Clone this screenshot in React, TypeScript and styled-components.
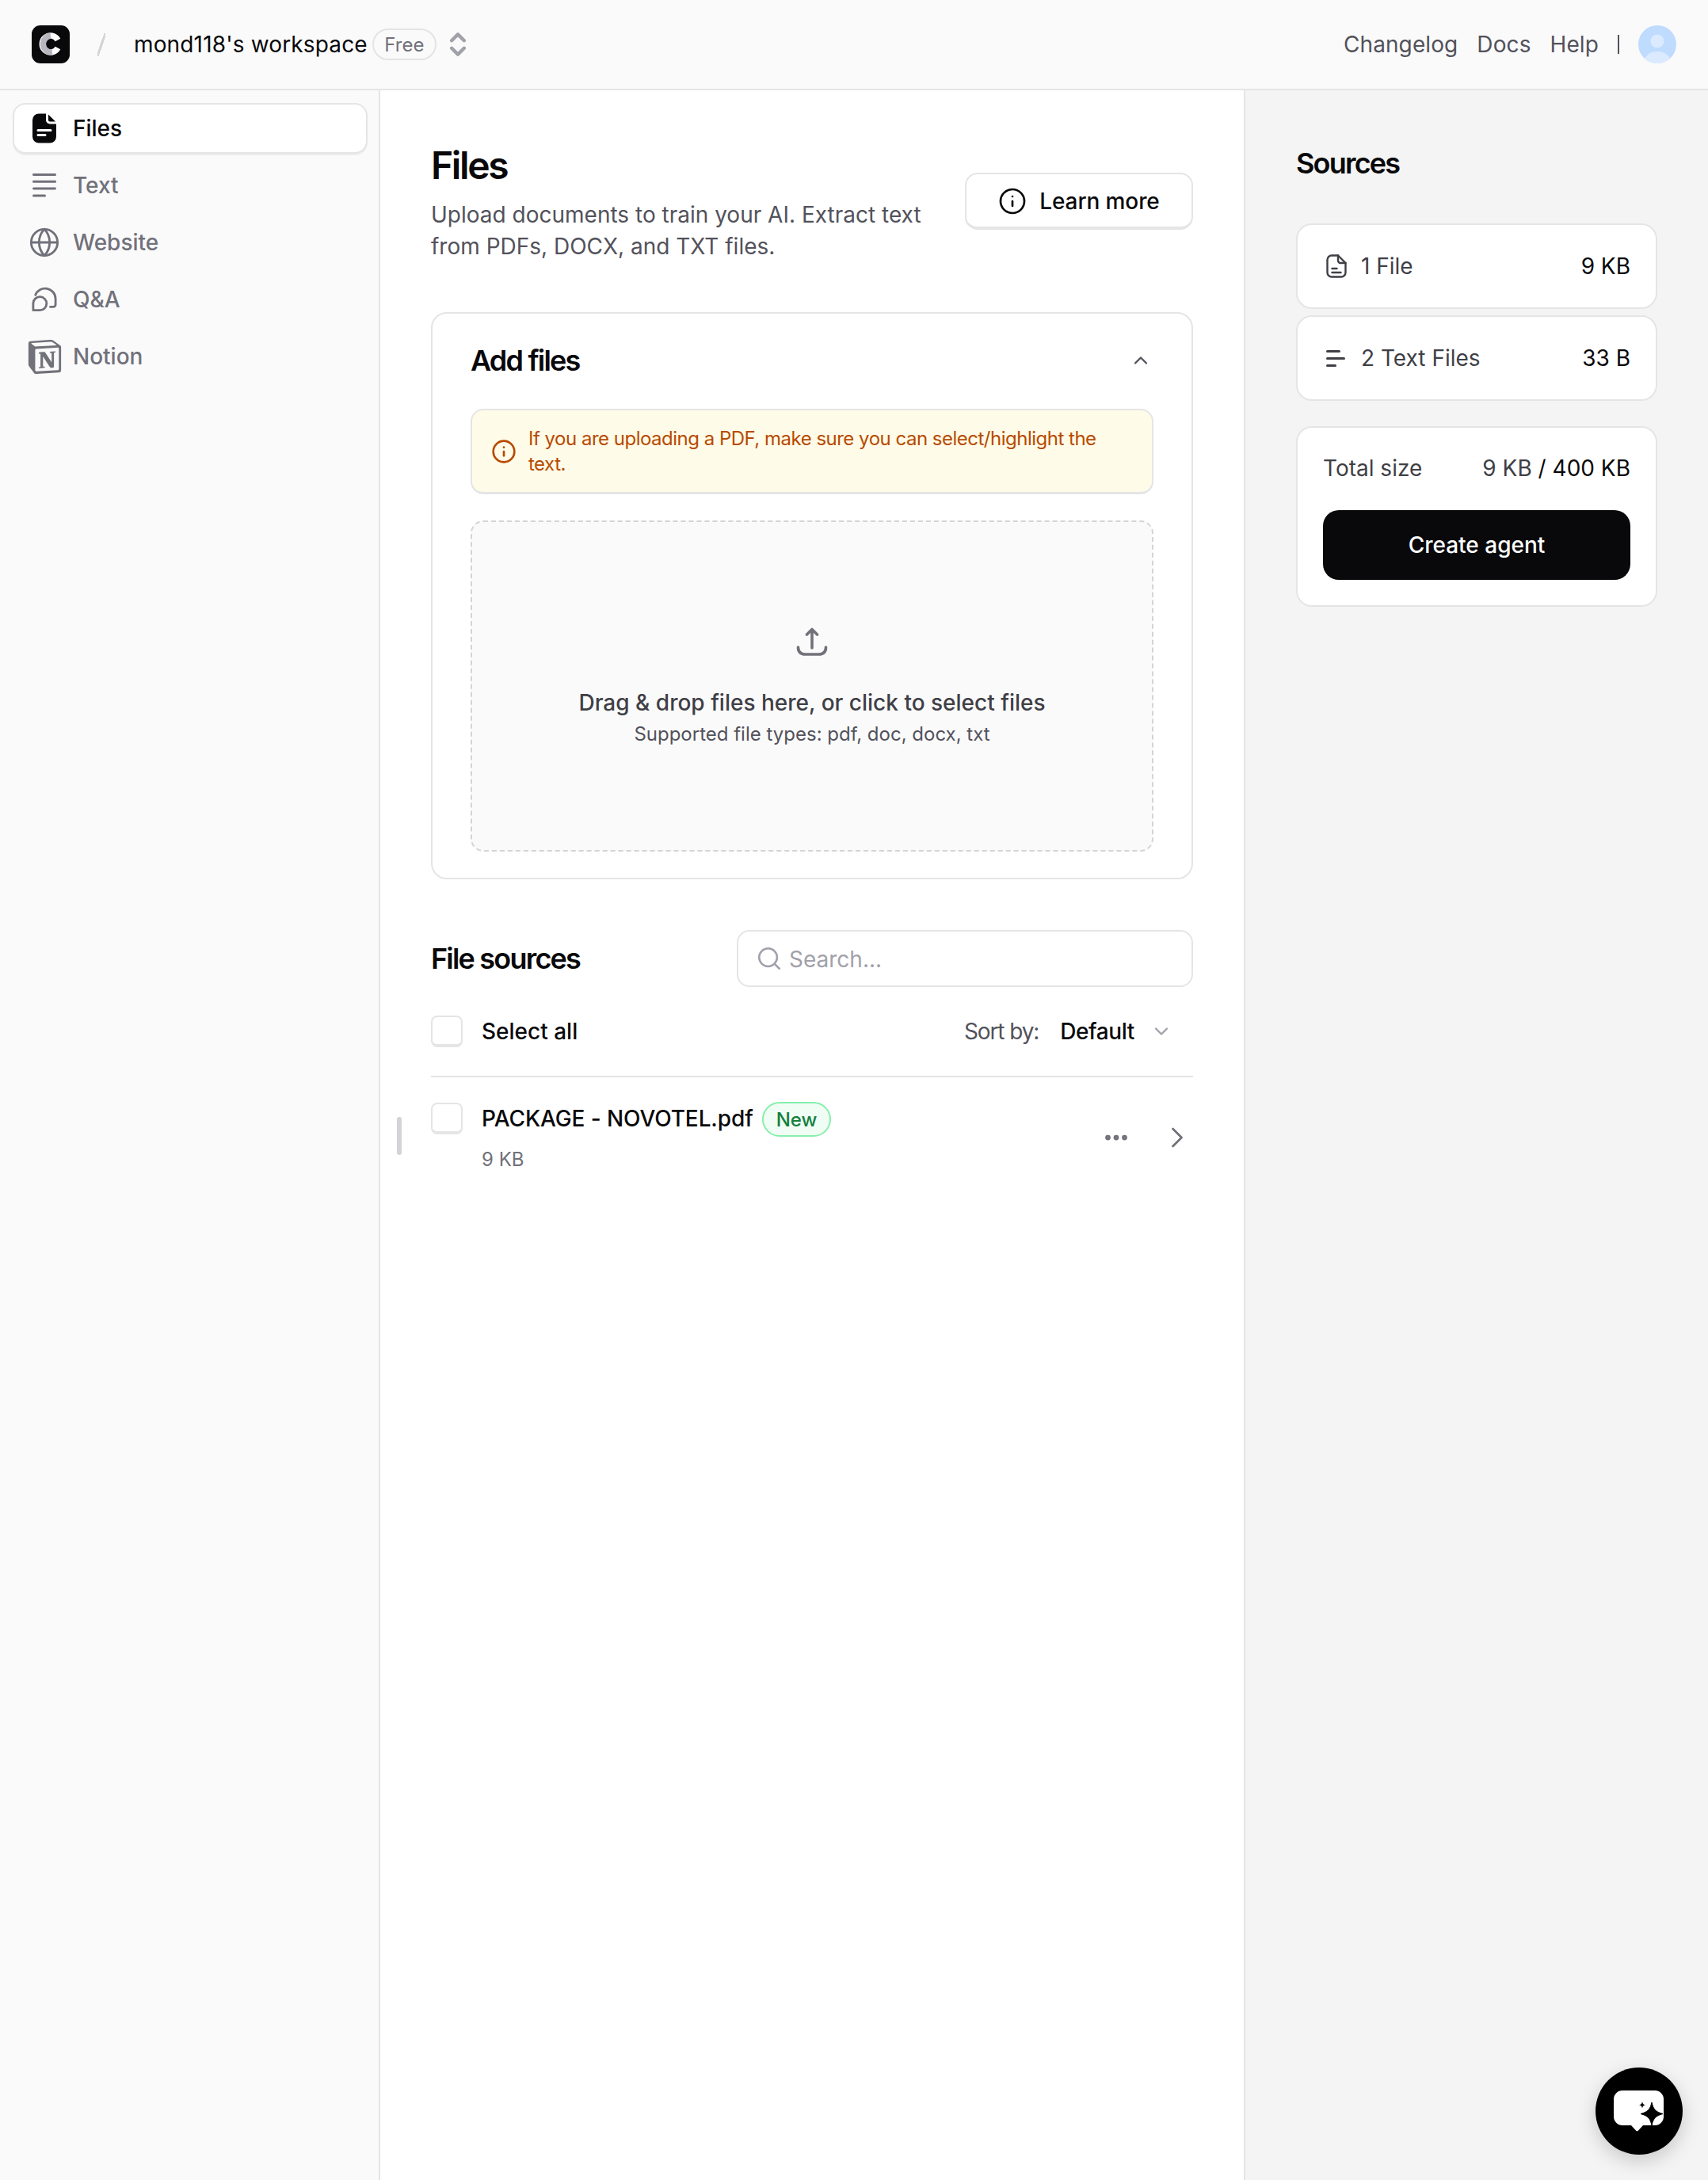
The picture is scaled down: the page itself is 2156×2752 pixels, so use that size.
import React from "react";
import styled, { createGlobalStyle } from "styled-components";
import { Globe, Info, ChevronUp, ChevronDown, ChevronRight, ChevronsUpDown, Search, Ellipsis } from "lucide-react";
import { SiNotion } from "react-icons/si";

const Global = createGlobalStyle`
  * { box-sizing: border-box; }
  html, body { margin: 0; padding: 0; background: #fff; }
  body { font-family: Inter, "Liberation Sans", sans-serif; color: #09090b; }
`;

const Page = styled.div`
  width: 2156px;
  height: 2752px;
  display: flex;
  flex-direction: column;
  overflow: hidden;
`;
const Header = styled.header`
  height: 114px;
  flex: none;
  display: flex;
  align-items: center;
  justify-content: space-between;
  padding: 0 40px;
  background: #fafafa;
  border-bottom: 2px solid #e5e5e5;
`;
const HeaderLeft = styled.div`
  display: flex;
  align-items: center;
`;
const Slash = styled.span`
  width: 10px;
  height: 29px;
  margin: 0 36px 0 35px;
  background: linear-gradient(to bottom right, transparent 42%, #d4d4d8 42%, #d4d4d8 58%, transparent 58%);
`;
const Workspace = styled.span`
  font-size: 28px;
  font-weight: 400;
  letter-spacing: 0.15px;
  color: #09090b;
`;
const PlanBadge = styled.span`
  margin-left: 6px;
  height: 40px;
  padding: 0 13.5px;
  display: inline-flex;
  align-items: center;
  border: 2px solid #e4e4e7;
  border-radius: 20px;
  font-size: 24px;
  color: #71717a;
`;
const UpDown = styled.span`
  margin-left: 8px;
  display: inline-flex;
  color: #a1a1aa;
`;
const HeaderRight = styled.nav`
  display: flex;
  align-items: center;
  gap: 24px;
`;
const TopLink = styled.a`
  font-size: 28px;
  letter-spacing: 0.1px;
  color: #52525b;
`;
const Pipe = styled.span`
  width: 2px;
  height: 24px;
  background: #52525b;
`;
const Avatar = styled.svg`
  width: 48px;
  height: 48px;
  display: block;
`;

const Body = styled.div`
  flex: 1;
  display: flex;
  min-height: 0;
`;
const Sidebar = styled.aside`
  width: 480px;
  flex: none;
  background: #fafafa;
  border-right: 2px solid #e5e5e5;
  padding: 16px 16px;
  display: flex;
  flex-direction: column;
  gap: 8px;
`;
const NavItem = styled.div<{ $active?: boolean }>`
  height: 64px;
  width: 448px;
  display: flex;
  align-items: center;
  gap: 20px;
  padding: 0 22px;
  border-radius: 16px;
  font-size: 28px;
  font-weight: 500;
  color: ${(p) => (p.$active ? "#09090b" : "#71717a")};
  background: ${(p) => (p.$active ? "#fff" : "transparent")};
  border: 2px solid ${(p) => (p.$active ? "#e5e5e5" : "transparent")};
  box-shadow: ${(p) => (p.$active ? "0 2px 0 #ececec" : "none")};
`;
const NavIcon = styled.span`
  width: 32px;
  height: 40px;
  display: flex;
  align-items: center;
  justify-content: center;
  flex: none;
`;

const Main = styled.main`
  width: 1091px;
  flex: none;
  padding: 67px 65px 0 64px;
  background: #fff;
`;
const TitleRow = styled.div`
  display: flex;
  align-items: flex-end;
  justify-content: space-between;
`;
const PageTitle = styled.h1`
  margin: 0 0 14px;
  font-size: 48px;
  line-height: 56px;
  font-weight: 600;
  letter-spacing: -0.05em;
  color: #09090b;
`;
const Lead = styled.p`
  margin: 0;
  width: 640px;
  font-size: 28px;
  line-height: 40px;
  color: #52525b;
`;
const LearnButton = styled.button`
  flex: none;
  width: 288px;
  height: 72px;
  margin-bottom: 41px;
  padding: 2px 0 0;
  display: flex;
  align-items: center;
  justify-content: center;
  gap: 16px;
  background: #fff;
  border: 2px solid #e5e5e5;
  border-bottom-width: 4px;
  border-radius: 16px;
  font: 500 28px Inter, sans-serif;
  letter-spacing: -0.1px;
  color: #09090b;
`;
const AddCard = styled.section`
  margin-top: 63px;
  border: 2px solid #e5e5e5;
  border-radius: 20px;
  padding: 35px 48px 32px;
  height: 716px;
`;
const CardHead = styled.div`
  display: flex;
  align-items: center;
  justify-content: space-between;
  height: 48px;
  color: #52525b;
  padding-right: 2px;
`;
const SectionTitle = styled.h2`
  margin: 0;
  font-size: 36px;
  line-height: 48px;
  font-weight: 600;
  letter-spacing: -0.05em;
  color: #09090b;
`;
const Alert = styled.div`
  margin-top: 37px;
  height: 108px;
  display: flex;
  align-items: center;
  gap: 15px;
  padding: 0 40px 0 24px;
  background: #fefbe8;
  border: 2px solid #e5e5e5;
  border-bottom-width: 3px;
  border-radius: 16px;
  color: #b84a00;
  font-size: 24px;
  line-height: 32px;
  font-weight: 400;
  letter-spacing: -0.5px;
`;
const Drop = styled.div`
  margin-top: 33px;
  height: 418px;
  background: #fafafa;
  border: 2px dashed #d4d4d8;
  border-radius: 16px;
  display: flex;
  flex-direction: column;
  align-items: center;
  justify-content: center;
  padding-top: 2px;
`;
const DropIcon = styled.svg`
  width: 48px;
  height: 48px;
  color: #71717a;
  margin-bottom: 32px;
`;
const DropTitle = styled.div`
  font-size: 28px;
  line-height: 40px;
  font-weight: 500;
  color: #3f3f46;
`;
const DropSub = styled.div`
  font-size: 24px;
  line-height: 40px;
  color: #52525b;
`;
const SourcesHead = styled.div`
  margin-top: 64px;
  display: flex;
  align-items: center;
  justify-content: space-between;
`;
const SearchBox = styled.div`
  width: 576px;
  height: 72px;
  border: 2px solid #e5e5e5;
  border-radius: 16px;
  display: flex;
  align-items: center;
  gap: 8px;
  padding: 0 22px;
  color: #a1a1aa;
  font-size: 28px;
`;
const Placeholder = styled.span`
  padding-top: 2px;
`;
const SelectRow = styled.div`
  margin-top: 36px;
  height: 78px;
  display: flex;
  align-items: flex-start;
  justify-content: space-between;
  border-bottom: 2px solid #e5e5e5;
`;
const CheckLabel = styled.label`
  display: flex;
  align-items: center;
  gap: 24px;
  font-size: 28px;
  font-weight: 500;
  color: #09090b;
`;
const Check = styled.span`
  width: 40px;
  height: 40px;
  display: block;
  flex: none;
  background: #fff;
  border: 2px solid #e5e5e5;
  border-bottom-width: 4px;
  border-radius: 8px;
`;
const Sort = styled.div`
  display: flex;
  align-items: center;
  height: 40px;
  font-size: 28px;
  padding-right: 26px;
`;
const SortLabel = styled.span`
  color: #52525b;
  letter-spacing: -1.1px;
  margin-right: 27px;
`;
const SortValue = styled.span`
  font-weight: 500;
  letter-spacing: -0.4px;
  color: #09090b;
  margin-right: 20px;
`;
const FileRow = styled.div`
  position: relative;
  margin-top: 32px;
  display: flex;
  align-items: flex-start;
  gap: 24px;
`;
const Handle = styled.span`
  position: absolute;
  left: -43px;
  top: 18px;
  width: 6px;
  height: 48px;
  border-radius: 3px;
  background: #d4d4d8;
`;
const FileInfo = styled.div`
  flex: 1;
  display: flex;
  flex-direction: column;
`;
const NameLine = styled.div`
  display: flex;
  align-items: center;
  gap: 11px;
  height: 40px;
`;
const FileName = styled.span`
  font-size: 28px;
  font-weight: 500;
  letter-spacing: -0.1px;
  color: #09090b;
`;
const NewBadge = styled.span`
  height: 44px;
  padding: 0 16px;
  display: inline-flex;
  align-items: center;
  background: #f0fdf4;
  border: 2px solid #86efac;
  border-radius: 22px;
  color: #15803d;
  font-size: 24px;
  font-weight: 500;
  margin-top: 2px;
`;
const FileSize = styled.div`
  margin-top: 18px;
  font-size: 24px;
  line-height: 28px;
  color: #71717a;
`;
const RowActions = styled.div`
  display: flex;
  align-items: center;
  gap: 37px;
  margin: 22px -2px 0 0;
  color: #71717a;
`;

const Panel = styled.aside`
  flex: 1;
  background: #f4f4f4;
  border-left: 2px solid #e5e5e5;
  padding: 64px 64px 0 64px;
  margin-left: -1px;
`;
const PanelTitle = styled.h2`
  margin: 0 0 48px;
  height: 56px;
  font-size: 36px;
  line-height: 56px;
  font-weight: 600;
  letter-spacing: -0.05em;
  color: #09090b;
`;
const PanelList = styled.div`
  display: flex;
  flex-direction: column;
  gap: 8px;
`;
const PanelCard = styled.div`
  height: 108px;
  display: flex;
  align-items: center;
  justify-content: space-between;
  background: #fff;
  border: 2px solid #e5e5e5;
  border-radius: 20px;
  padding: 0 32px 0 36px;
  font-size: 28px;
`;
const PanelLabel = styled.span`
  display: flex;
  align-items: center;
  gap: 18px;
  color: #3f3f46;
`;
const PanelValue = styled.span`
  color: #09090b;
  font-weight: 400;
`;
const TotalCard = styled.div`
  margin-top: 32px;
  height: 228px;
  background: #fff;
  border: 2px solid #e5e5e5;
  border-radius: 20px;
  padding: 33px 32px 0;
`;
const TotalRow = styled.div`
  display: flex;
  justify-content: space-between;
  align-items: center;
  height: 36px;
  font-size: 28px;
  color: #3f3f46;
`;
const TotalMax = styled.span`
  color: #09090b;
`;
const CreateButton = styled.button`
  margin-top: 35px;
  width: 100%;
  height: 88px;
  background: #09090b;
  border: 0;
  border-radius: 20px;
  color: #fff;
  font: 500 28px Inter, sans-serif;
`;
const ChatBubble = styled.div`
  position: fixed;
  right: 32px;
  bottom: 32px;
  width: 110px;
  height: 110px;
  border-radius: 50%;
  background: #000;
  display: flex;
  align-items: center;
  justify-content: center;
  box-shadow: 0 8px 24px rgba(0, 0, 0, 0.18);
`;

const Logo = () => (
  <svg width="48" height="48" viewBox="0 0 48 48" style={{ display: "block" }}>
    <rect width="48" height="48" rx="11" fill="#09090b" />
    <path d="M33 18.500A10.500 10.500 0 1 0 33 28.500" fill="none" stroke="#fff" strokeWidth="7.500" />
    <path d="M24 13A10.500 10.500 0 0 0 26 34" fill="none" stroke="#b9b6bf" strokeWidth="7.500" />
  </svg>
);

const FileSolid = () => (
  <svg width="30" height="38" viewBox="0 0 30 37">
    <path fillRule="evenodd" fill="#09090b" d="M8 0h9v8a5 5 0 0 0 5 5h8v16a8 8 0 0 1-8 8H8a8 8 0 0 1-8-8V8a8 8 0 0 1 8-8ZM7 19.500a1.500 1.500 0 0 0 0 3h16a1.500 1.500 0 0 0 0-3ZM7 25.500a1.500 1.500 0 0 0 0 3h9a1.500 1.500 0 0 0 0-3Z" />
    <path fill="#09090b" d="M20 1l9 9h-7a2 2 0 0 1-2-2Z" />
  </svg>
);
const Lines = ({ rows, w, color, sw, step }: { rows: number[]; w: number; color: string; sw: number; step: number }) => {
  const h = (rows.length - 1) * step + sw;
  return (
    <svg width={w} height={h} viewBox={`0 0 ${w} ${h}`}>
      {rows.map((r, i) => (
        <line key={i} x1={sw / 2} x2={r - sw / 2} y1={sw / 2 + i * step} y2={sw / 2 + i * step} stroke={color} strokeWidth={sw} strokeLinecap="round" />
      ))}
    </svg>
  );
};
const QA = () => (
  <svg width="34" height="34" viewBox="0 0 34 34" fill="none" stroke="#71717a" strokeWidth="3" strokeLinecap="round" strokeLinejoin="round">
    <path d="M5 11A14 14 0 0 1 32 16v8a3 3 0 0 1-3 3h-4" />
    <path d="M2 31.500V22a9 9 0 1 1 9 9.500Z" />
  </svg>
);
const FileOutline = () => (
  <svg width="26" height="30" viewBox="0 0 26 30" fill="none" stroke="#3f3f46" strokeWidth="2.400" strokeLinecap="round" strokeLinejoin="round">
    <path d="M7 1.500h8L24.500 11v12a5.500 5.500 0 0 1-5.500 5.500H7A5.500 5.500 0 0 1 1.500 23V7A5.500 5.500 0 0 1 7 1.500Z" />
    <path d="M15 1.500V8a3 3 0 0 0 3 3h6.500" />
    <path d="M7.500 18h6M7.500 23h11" />
  </svg>
);
const AvatarIcon = () => (
  <Avatar viewBox="0 0 48 48">
    <defs>
      <clipPath id="av"><circle cx="24" cy="24" r="24" /></clipPath>
    </defs>
    <g clipPath="url(#av)">
      <rect width="48" height="48" fill="#bfdbfe" />
      <circle cx="24" cy="20" r="8.500" fill="#dbeafe" />
      <ellipse cx="24" cy="44" rx="16" ry="11" fill="#dbeafe" />
    </g>
  </Avatar>
);
const ChatIcon = () => (
  <svg width="66" height="52" viewBox="0 0 66 52">
    <path fill="#fff" d="M12 0h41a11 11 0 0 1 11 11v22a11 11 0 0 1-11 11H38l-6 6.500a2 2 0 0 1-3 0l-6-6.500H12A11 11 0 0 1 1 33V11A11 11 0 0 1 12 0Z" />
    <path fill="#000" stroke="#000" strokeWidth="1" d="M49 15c2 9 5 12 14 14.500c-9 2.500-12 5.500-14 14.500c-2-9-5-12-14-14.500c9-2.500 12-5.500 14-14.500Z" />
    <path fill="#000" d="M37 14c.7 3 1.300 3.600 4 4.300c-2.700.7-3.300 1.300-4 4.300c-.7-3-1.300-3.600-4-4.300c2.700-.7 3.300-1.300 4-4.300Z" />
  </svg>
);

export default function App() {
  return (
    <Page>
      <Global />
      <Header>
        <HeaderLeft>
          <Logo />
          <Slash />
          <Workspace>mond118's workspace</Workspace>
          <PlanBadge>Free</PlanBadge>
          <UpDown><ChevronsUpDown size={38} strokeWidth={2.800} /></UpDown>
        </HeaderLeft>
        <HeaderRight>
          <TopLink>Changelog</TopLink>
          <TopLink>Docs</TopLink>
          <TopLink>Help</TopLink>
          <Pipe />
          <AvatarIcon />
        </HeaderRight>
      </Header>
      <Body>
        <Sidebar>
          <NavItem $active>
            <NavIcon><FileSolid /></NavIcon>
            Files
          </NavItem>
          <NavItem>
            <NavIcon><Lines rows={[30, 30, 30, 17]} w={30} color="#71717a" sw={3} step={8.800} /></NavIcon>
            Text
          </NavItem>
          <NavItem>
            <NavIcon><Globe size={40} strokeWidth={1.700} color="#71717a" style={{ flex: "none" }} /></NavIcon>
            Website
          </NavItem>
          <NavItem>
            <NavIcon><QA /></NavIcon>
            Q&amp;A
          </NavItem>
          <NavItem>
            <NavIcon><SiNotion size={43} color="#71717a" style={{ flex: "none" }} /></NavIcon>
            Notion
          </NavItem>
        </Sidebar>
        <Main>
          <TitleRow>
            <div>
              <PageTitle>Files</PageTitle>
              <Lead>Upload documents to train your AI. Extract text from PDFs, DOCX, and TXT files.</Lead>
            </div>
            <LearnButton>
              <Info size={36} strokeWidth={1.800} />
              Learn more
            </LearnButton>
          </TitleRow>
          <AddCard>
            <CardHead>
              <SectionTitle>Add files</SectionTitle>
              <ChevronUp size={28} strokeWidth={2} />
            </CardHead>
            <Alert>
              <Info size={32} strokeWidth={2} style={{ flex: "none" }} />
              <span>If you are uploading a PDF, make sure you can select/highlight the text.</span>
            </Alert>
            <Drop>
              <DropIcon viewBox="0 0 48 48" fill="none" stroke="currentColor" strokeWidth="3.600" strokeLinecap="round" strokeLinejoin="round">
                <path d="M24 31V8M17.500 14l6.500-6.500 6.500 6.500" />
                <path d="M6.500 30c0 6 3 9 9 9h17c6 0 9-3 9-9" />
              </DropIcon>
              <DropTitle>Drag &amp; drop files here, or click to select files</DropTitle>
              <DropSub>Supported file types: pdf, doc, docx, txt</DropSub>
            </Drop>
          </AddCard>
          <SourcesHead>
            <SectionTitle>File sources</SectionTitle>
            <SearchBox>
              <Search size={34} strokeWidth={1.800} />
              <Placeholder>Search...</Placeholder>
            </SearchBox>
          </SourcesHead>
          <SelectRow>
            <CheckLabel><Check />Select all</CheckLabel>
            <Sort>
              <SortLabel>Sort by:</SortLabel>
              <SortValue>Default</SortValue>
              <ChevronDown size={28} strokeWidth={2} color="#a1a1aa" />
            </Sort>
          </SelectRow>
          <FileRow>
            <Handle />
            <Check />
            <FileInfo>
              <NameLine>
                <FileName>PACKAGE - NOVOTEL.pdf</FileName>
                <NewBadge>New</NewBadge>
              </NameLine>
              <FileSize>9 KB</FileSize>
            </FileInfo>
            <RowActions>
              <Ellipsis size={36} strokeWidth={2.500} />
              <ChevronRight size={44} strokeWidth={1.500} />
            </RowActions>
          </FileRow>
        </Main>
        <Panel>
          <PanelTitle>Sources</PanelTitle>
          <PanelList>
            <PanelCard>
              <PanelLabel><FileOutline />1 File</PanelLabel>
              <PanelValue>9 KB</PanelValue>
            </PanelCard>
            <PanelCard>
              <PanelLabel><Lines rows={[18, 24, 13]} w={26} color="#3f3f46" sw={3} step={9} />2 Text Files</PanelLabel>
              <PanelValue>33 B</PanelValue>
            </PanelCard>
          </PanelList>
          <TotalCard>
            <TotalRow>
              <span>Total size</span>
              <span>9 KB <TotalMax>/ 400 KB</TotalMax></span>
            </TotalRow>
            <CreateButton>Create agent</CreateButton>
          </TotalCard>
        </Panel>
      </Body>
      <ChatBubble><ChatIcon /></ChatBubble>
    </Page>
  );
}
